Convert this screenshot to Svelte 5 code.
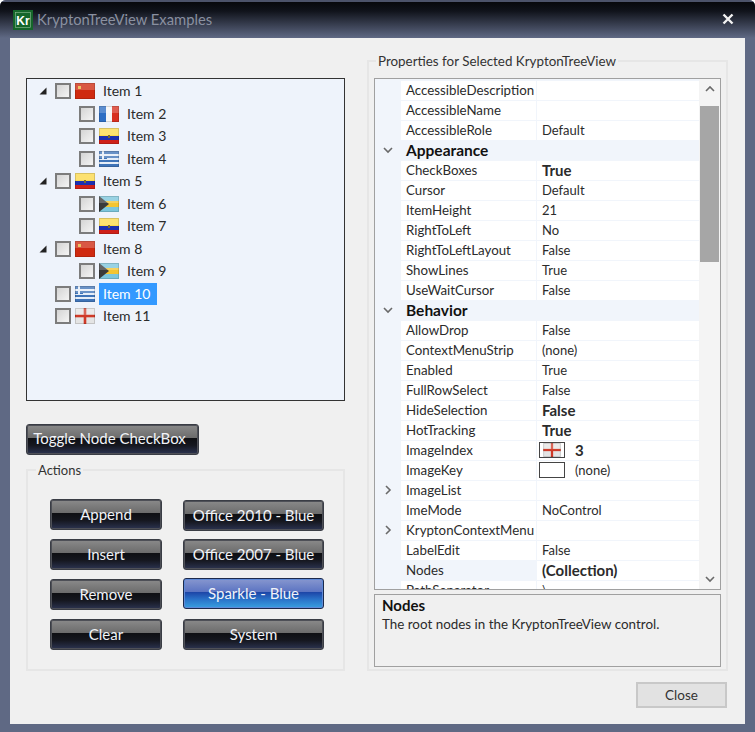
<script lang="ts">
  type Flag = 'china' | 'france' | 'ecuador' | 'greece' | 'bahamas' | 'england';

  const treeItems: { label: string; flag: Flag; depth: number; open?: boolean; selected?: boolean }[] = [
    { label: 'Item 1', flag: 'china', depth: 0, open: true },
    { label: 'Item 2', flag: 'france', depth: 1 },
    { label: 'Item 3', flag: 'ecuador', depth: 1 },
    { label: 'Item 4', flag: 'greece', depth: 1 },
    { label: 'Item 5', flag: 'ecuador', depth: 0, open: true },
    { label: 'Item 6', flag: 'bahamas', depth: 1 },
    { label: 'Item 7', flag: 'ecuador', depth: 1 },
    { label: 'Item 8', flag: 'china', depth: 0, open: true },
    { label: 'Item 9', flag: 'bahamas', depth: 1 },
    { label: 'Item 10', flag: 'greece', depth: 0, selected: true },
    { label: 'Item 11', flag: 'england', depth: 0 }
  ];

  const actions = ['Append', 'Insert', 'Remove', 'Clear'];
  const palettes = ['Office 2010 - Blue', 'Office 2007 - Blue', 'Sparkle - Blue', 'System'];

  type Prop = {
    name: string;
    value?: string;
    bold?: boolean;
    category?: boolean;
    expand?: boolean;
    swatch?: 'flag' | 'blank';
    active?: boolean;
  };

  const props: Prop[] = [
    { name: 'AccessibleDescription' },
    { name: 'AccessibleName' },
    { name: 'AccessibleRole', value: 'Default' },
    { name: 'Appearance', category: true },
    { name: 'CheckBoxes', value: 'True', bold: true },
    { name: 'Cursor', value: 'Default' },
    { name: 'ItemHeight', value: '21' },
    { name: 'RightToLeft', value: 'No' },
    { name: 'RightToLeftLayout', value: 'False' },
    { name: 'ShowLines', value: 'True' },
    { name: 'UseWaitCursor', value: 'False' },
    { name: 'Behavior', category: true },
    { name: 'AllowDrop', value: 'False' },
    { name: 'ContextMenuStrip', value: '(none)' },
    { name: 'Enabled', value: 'True' },
    { name: 'FullRowSelect', value: 'False' },
    { name: 'HideSelection', value: 'False', bold: true },
    { name: 'HotTracking', value: 'True', bold: true },
    { name: 'ImageIndex', value: '3', bold: true, swatch: 'flag' },
    { name: 'ImageKey', value: '(none)', swatch: 'blank' },
    { name: 'ImageList', expand: true },
    { name: 'ImeMode', value: 'NoControl' },
    { name: 'KryptonContextMenu', expand: true },
    { name: 'LabelEdit', value: 'False' },
    { name: 'Nodes', value: '(Collection)', bold: true, active: true },
    { name: 'PathSeparator', value: '\\' }
  ];
</script>

{#snippet flagIcon(kind: Flag)}
  <svg class="flag" width="20" height="16" viewBox="0 0 20 16">
    {#if kind === 'china'}
      <rect width="20" height="16" fill="#cf2a10" />
      <rect x="3" y="3" width="3" height="3" fill="#e9b23c" />
    {:else if kind === 'france'}
      <rect width="7" height="16" fill="#2f6fc4" />
      <rect x="7" width="6" height="16" fill="#f6f6f6" />
      <rect x="13" width="7" height="16" fill="#d8301f" />
    {:else if kind === 'ecuador'}
      <rect width="20" height="8" fill="#fbd94a" />
      <rect y="8" width="20" height="4" fill="#1c2fb0" />
      <rect y="12" width="20" height="4" fill="#cf2018" />
      <rect x="9" y="7" width="2" height="3" fill="#7a6a30" />
    {:else if kind === 'greece'}
      <rect width="20" height="16" fill="#3f74b8" />
      <rect y="3" width="20" height="2" fill="#e6eef8" />
      <rect y="7" width="20" height="2" fill="#e6eef8" />
      <rect y="11" width="20" height="2" fill="#e6eef8" />
      <rect width="8" height="8" fill="#3f74b8" />
      <rect x="3" width="2" height="8" fill="#e6eef8" />
      <rect y="3" width="8" height="2" fill="#e6eef8" />
    {:else if kind === 'bahamas'}
      <rect width="20" height="16" fill="#7cc6dc" />
      <rect y="5" width="20" height="6" fill="#f4c531" />
      <polygon points="0,0 10,8 0,16" fill="#3a3a3a" />
    {:else}
      <rect width="20" height="16" fill="#e4e4e4" />
      <rect x="8.7" width="2.6" height="16" fill="#cf3a28" />
      <rect y="6.7" width="20" height="2.6" fill="#cf3a28" />
    {/if}
    <!-- glossy top half, the icons in the tree all have it -->
    <rect width="20" height="7" fill="#fff" opacity="0.22" />
    <rect x="0.5" y="0.5" width="19" height="15" fill="none" stroke="#000" stroke-opacity="0.14" />
  </svg>
{/snippet}

{#snippet chevron(dir: 'up' | 'down' | 'right')}
  <svg class="chev" width="12" height="12" viewBox="0 0 12 12">
    {#if dir === 'up'}
      <path d="M2 8 L6 4 L10 8" />
    {:else if dir === 'down'}
      <path d="M2 4 L6 8 L10 4" />
    {:else}
      <path d="M4 2 L8 6 L4 10" />
    {/if}
  </svg>
{/snippet}

<div class="window">
  <header class="titlebar">
    <svg class="logo" width="20" height="20" viewBox="0 0 20 20">
      <rect width="20" height="20" fill="#15662a" />
      <rect x="2.5" y="2.5" width="15" height="15" fill="none" stroke="#8fbc96" stroke-width="0.6" />
      <text x="10" y="14.5" text-anchor="middle" font-size="12" font-weight="700" fill="#fff" font-family="Liberation Sans, sans-serif">Kr</text>
    </svg>
    <span class="title">KryptonTreeView Examples</span>
    <svg class="close-x" width="12" height="12" viewBox="0 0 12 12">
      <path d="M1.5 1.5 L10.5 10.5 M10.5 1.5 L1.5 10.5" />
    </svg>
  </header>

  <main class="client">
    <div class="columns">
      <section class="left">
        <div class="tree">
          {#each treeItems as item}
            <div class="tree-row" class:child={item.depth > 0}>
              <span class="expander">
                {#if item.open}
                  <svg width="8" height="8" viewBox="0 0 8 8"><polygon points="7.5,0.5 7.5,7.5 0.5,7.5" fill="#222" /></svg>
                {/if}
              </span>
              <span class="check"></span>
              {@render flagIcon(item.flag)}
              <span class="tree-label" class:selected={item.selected}>{item.label}</span>
            </div>
          {/each}
        </div>

        <button class="gloss toggle">Toggle Node CheckBox</button>

        <fieldset class="group actions">
          <legend>Actions</legend>
          <div class="action-grid">
            <div class="btn-col first">
              {#each actions as label}
                <button class="gloss">{label}</button>
              {/each}
            </div>
            <div class="btn-col second">
              {#each palettes as label, i}
                <button class="gloss" class:active={i === 2}>{label}</button>
              {/each}
            </div>
          </div>
        </fieldset>
      </section>

      <fieldset class="group props">
        <legend>Properties for Selected KryptonTreeView</legend>
        <div class="grid">
          <div class="grid-rows">
            {#each props as p}
              {#if p.category}
                <div class="prop category">
                  <span class="gutter">{@render chevron('down')}</span>
                  <span class="cat-name">{p.name}</span>
                </div>
              {:else}
                <div class="prop">
                  <span class="gutter">
                    {#if p.expand}{@render chevron('right')}{/if}
                  </span>
                  <span class="name" class:active={p.active}>{p.name}</span>
                  <span class="value" class:bold={p.bold} class:has-swatch={p.swatch}>
                    {#if p.swatch === 'flag'}
                      <span class="swatch">{@render flagIcon('england')}</span>
                    {:else if p.swatch === 'blank'}
                      <span class="swatch"></span>
                    {/if}
                    {p.value ?? ''}
                  </span>
                </div>
              {/if}
            {/each}
          </div>
          <div class="scrollbar">
            <span class="arrow">{@render chevron('up')}</span>
            <div class="track"><div class="thumb"></div></div>
            <span class="arrow">{@render chevron('down')}</span>
          </div>
        </div>
        <div class="description">
          <strong>Nodes</strong>
          <span>The root nodes in the KryptonTreeView control.</span>
        </div>
      </fieldset>
    </div>

    <div class="footer">
      <button class="close">Close</button>
    </div>
  </main>
</div>

<style>
  :global(body) {
    margin: 0;
    background: #fff;
  }

  .window {
    width: 755px;
    height: 732px;
    box-sizing: border-box;
    display: flex;
    flex-direction: column;
    padding: 0 10px 8px;
    border-radius: 6px 6px 0 0;
    background: #5f6984;
    overflow: hidden;
    font-family: Lato, 'Noto Sans', sans-serif;
    font-size: 13px;
    color: #2b2b2b;
  }

  .titlebar {
    height: 38px;
    margin: 0 -10px;
    padding: 0 21px 0 13px;
    flex: none;
    display: flex;
    align-items: center;
    gap: 4px;
    box-sizing: border-box;
    border-top: 2px solid #4c536a;
    background: linear-gradient(#07080c, #10131b 25%, #5f6984);
  }

  .logo {
    flex: none;
  }

  .title {
    flex: 1;
    color: #8a90a0;
    font-size: 14.75px;
    margin-top: -2px;
  }

  .close-x {
    margin-top: -2px;
  }

  .close-x path {
    stroke: #f2f2f2;
    stroke-width: 2.4;
    fill: none;
  }

  .client {
    flex: 1;
    background: #f0f0f0;
    padding: 15px 17px 17px 16px;
    display: flex;
    flex-direction: column;
    min-height: 0;
  }

  .columns {
    display: flex;
    gap: 22px;
    height: 619px;
  }

  .left {
    width: 319px;
    padding-top: 25px;
    display: flex;
    flex-direction: column;
  }

  .tree {
    height: 323px;
    box-sizing: border-box;
    border: 1px solid #333;
    background: #eef3fb;
    padding: 1px 0 0 12px;
  }

  .tree-row {
    height: 22.5px;
    display: flex;
    align-items: center;
  }

  .expander {
    width: 13px;
    flex: none;
    margin-right: 3px;
    display: flex;
  }

  .tree-row.child .expander {
    display: none;
  }

  .tree-row.child {
    padding-left: 40px;
  }

  .check {
    width: 16px;
    height: 16px;
    flex: none;
    box-sizing: border-box;
    border: 2px solid #7c7c7c;
    background: linear-gradient(135deg, #d4d4d4, #f4f4f4);
    margin-right: 4px;
  }

  .flag {
    display: block;
    flex: none;
  }

  .tree-label {
    margin-left: 4px;
    padding: 0 4px;
    height: 22px;
    line-height: 21px;
    font-size: 14px;
  }

  .tree-label.selected {
    background: #3399ff;
    color: #fff;
    padding-right: 7px;
  }

  .gloss {
    height: 31px;
    box-sizing: border-box;
    padding: 0 0 2px;
    border: 1px solid #3a3d45;
    border-radius: 3px;
    color: #f1f3f8;
    font: inherit;
    font-size: 15px;
    background: linear-gradient(#8a8a8a, #6c6c6c 44%, #0e0f13 46%, #15171f 70%, #2b3350);
    box-shadow: inset 0 0 0 1px #4e5057;
  }

  .gloss.active {
    background: linear-gradient(#8797cf, #5c74c2 44%, #1d46a8 46%, #2a72c8 70%, #38a0e0);
    border-color: #1c2a4c;
    box-shadow: inset 0 0 0 1px #5f8ad8;
  }

  .toggle {
    width: 173px;
    margin-top: 23px;
    padding: 0 6px 4px 0;
  }

  .group {
    margin: 0;
    border: 2px solid #e6e6e6;
    box-sizing: border-box;
    min-width: 0;
  }

  .group legend {
    padding: 0 2px;
    margin-left: 8px;
    font-size: 13px;
    color: #333;
  }

  .props legend {
    margin-left: 2px;
    font-size: 13.4px;
  }

  .actions {
    height: 209px;
    margin-top: 7px;
    padding: 0;
  }

  .action-grid {
    display: flex;
    gap: 21px;
    padding: 21px 0 0 22px;
  }

  .btn-col {
    display: flex;
    flex-direction: column;
    gap: 9px;
  }

  .btn-col.first {
    width: 112px;
  }

  .btn-col.second {
    width: 141px;
    margin-top: 1px;
    gap: 8px;
  }

  .btn-col.second .gloss:last-child {
    margin-top: 2px;
  }

  .props {
    flex: 1;
    padding: 0 5px 2px;
    display: flex;
    flex-direction: column;
    min-height: 0;
  }

  .grid {
    height: 512px;
    flex: none;
    margin-top: 9px;
    display: flex;
    box-sizing: border-box;
    border: 1px solid #a0a0a0;
    background: #fff;
  }

  .grid-rows {
    flex: 1;
    min-width: 0;
    overflow: hidden;
    background: #f1f5fb;
    padding-top: 1px;
  }

  .prop {
    height: 20px;
    display: flex;
    align-items: center;
    box-sizing: border-box;
  }

  .gutter {
    width: 26px;
    flex: none;
    display: flex;
    justify-content: center;
  }

  .name {
    width: 130px;
    flex: none;
    height: 19px;
    line-height: 19px;
    padding-left: 5px;
    background: #fff;
    white-space: nowrap;
    overflow: hidden;
    margin-right: 1px;
    font-size: 13.3px;
  }

  .name.active {
    background: #f1f5fb;
  }

  .value {
    flex: 1;
    height: 19px;
    line-height: 19px;
    padding-left: 5px;
    background: #fff;
    display: flex;
    align-items: center;
    gap: 10px;
  }

  .value.has-swatch {
    padding-left: 2px;
  }

  .value.bold {
    font-weight: 700;
    font-size: 15px;
  }

  .category {
    background: #f1f5fb;
  }

  .cat-name {
    padding-left: 5px;
    font-weight: 700;
    font-size: 15.5px;
    color: #111;
  }

  .swatch {
    width: 26px;
    height: 16px;
    box-sizing: border-box;
    border: 1px solid #444;
    display: flex;
    background: #fff;
  }

  .swatch :global(.flag) {
    width: 100%;
    height: 100%;
  }

  .chev path {
    fill: none;
    stroke: #6a6a6a;
    stroke-width: 1.6;
  }

  .scrollbar {
    width: 21px;
    flex: none;
    display: flex;
    flex-direction: column;
    background: #f4f4f4;
  }

  .arrow {
    height: 20px;
    display: flex;
    align-items: center;
    justify-content: center;
    flex: none;
  }

  .track {
    flex: 1;
    padding: 7px 1px 0;
  }

  .thumb {
    height: 156px;
    background: #a6a6a6;
  }

  .description {
    flex: 1;
    margin-top: 4px;
    box-sizing: border-box;
    border: 1px solid #a0a0a0;
    padding: 1px 7px;
    display: flex;
    flex-direction: column;
    line-height: 19px;
    font-size: 13.4px;
  }

  .description strong {
    font-size: 15px;
    color: #111;
  }

  .footer {
    display: flex;
    justify-content: flex-end;
    margin-top: 11px;
    margin-right: 1px;
  }

  .close {
    width: 91px;
    height: 26px;
    border: 2px solid #c8c8c8;
    background: #e2e2e2;
    font: inherit;
    font-size: 13.5px;
    color: #333;
    padding: 0;
  }
</style>
